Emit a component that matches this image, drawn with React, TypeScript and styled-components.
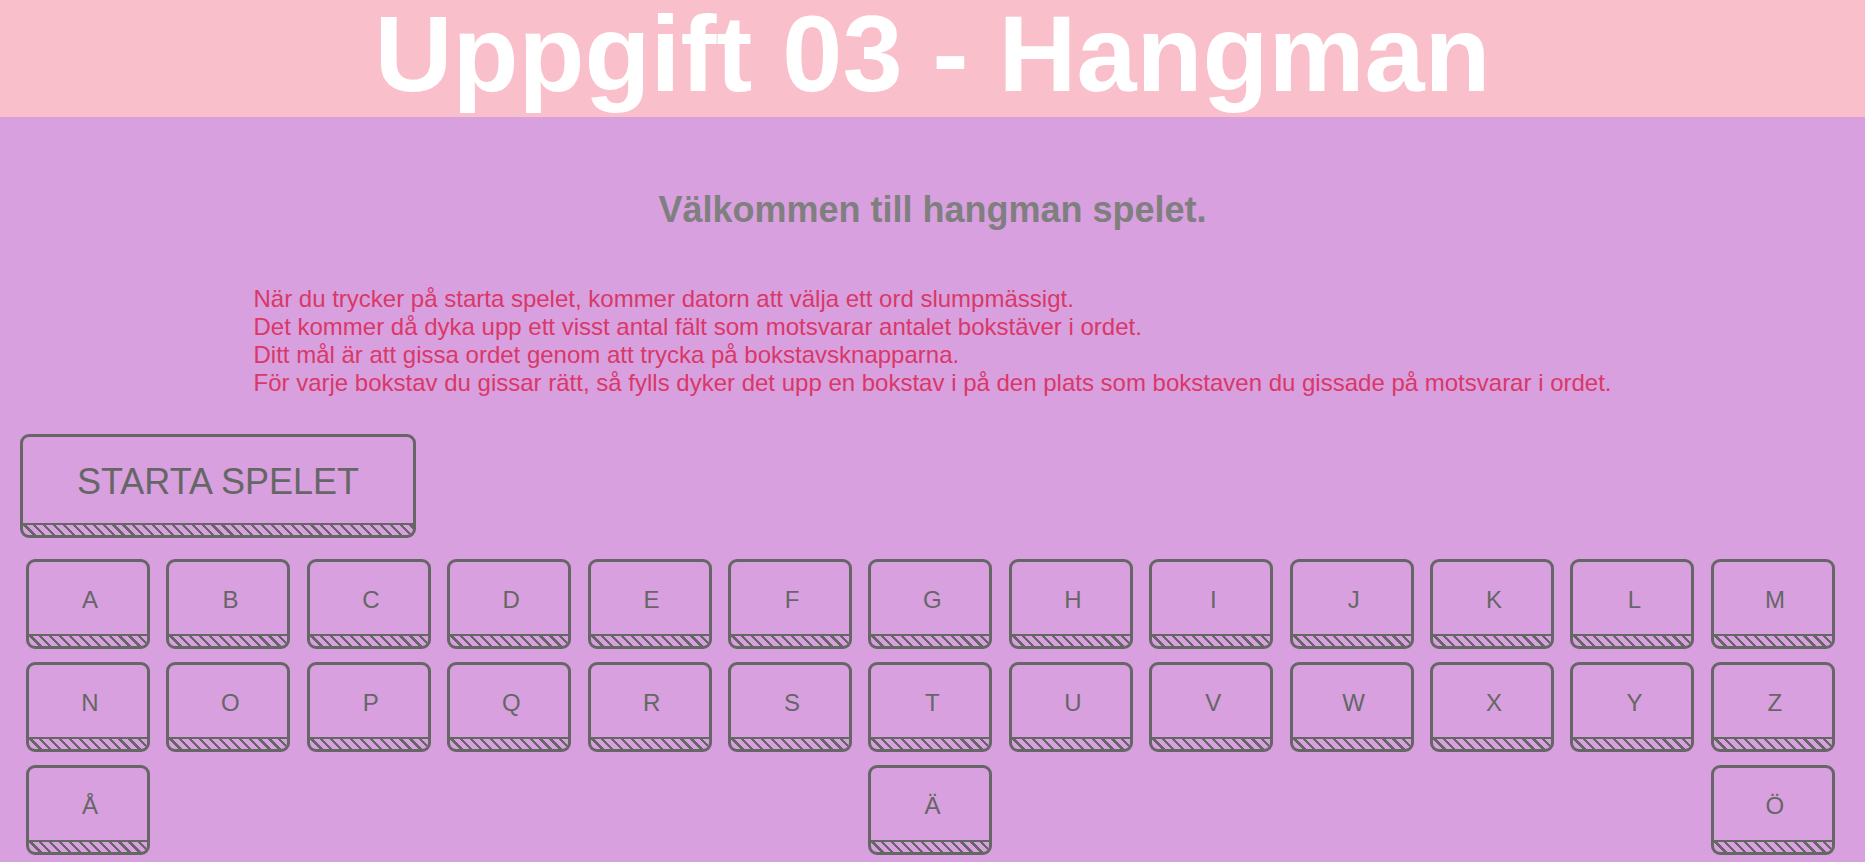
import React from "react";
import styled, { createGlobalStyle } from "styled-components";

const GlobalStyle = createGlobalStyle`
  html, body {
    margin: 0;
    padding: 0;
    min-height: 100%;
    background: #d8a0de;
    font-family: "Liberation Sans", Arial, sans-serif;
  }
`;

const Page = styled.div`
  display: flex;
  flex-direction: column;
  min-height: 862px;
  background: #d8a0de;
`;

const Header = styled.header`
  height: 117px;
  background: #f9c0cb;
  display: flex;
  justify-content: center;
  align-items: flex-start;
`;

const Title = styled.h1`
  margin: 0;
  font-size: 108px;
  line-height: 108px;
  font-weight: bold;
  color: #ffffff;
  white-space: nowrap;
`;

const Welcome = styled.h2`
  margin: 72px 0 0;
  text-align: center;
  font-size: 36px;
  font-weight: bold;
  color: #7f7f7f;
  line-height: normal;
`;

const Intro = styled.p`
  margin: 54px auto 0;
  width: fit-content;
  font-size: 24px;
  line-height: normal;
  color: #d93868;
`;

const Controls = styled.div`
  display: flex;
  flex-direction: column;
  margin-top: 37px;
`;

const KeyBase = styled.button<{ $w: number; $h: number; $col?: number }>`
  box-sizing: border-box;
  width: ${(p) => p.$w}px;
  height: ${(p) => p.$h}px;
  padding: 0;
  border: 3px solid #666;
  border-radius: 9px;
  background: transparent;
  color: #666;
  font-family: "Liberation Sans", Arial, sans-serif;
  display: flex;
  flex-direction: column;
  overflow: hidden;
  cursor: pointer;
  ${(p) => (p.$col ? `grid-column: ${p.$col};` : "")}
`;

const KeyLabel = styled.span<{ $size: number; $indent: number }>`
  flex: 1;
  display: flex;
  align-items: center;
  justify-content: center;
  padding: 3px 0 0 ${(p) => p.$indent}px;
  font-size: ${(p) => p.$size}px;
`;

const Hatch = styled.span<{ $h: number }>`
  display: block;
  height: ${(p) => p.$h}px;
  border-top: 2px solid #666;
  background: repeating-linear-gradient(
    45deg,
    #666 0px,
    #666 2.2px,
    transparent 2.2px,
    transparent 7px
  );
`;

const StartRow = styled.div`
  padding-left: 20px;
`;

const LetterGrid = styled.div`
  display: grid;
  grid-template-columns: repeat(13, 124px);
  justify-content: space-between;
  row-gap: 13px;
  padding: 0 30px 0 26px;
  margin-top: 21px;
`;

const letters = "ABCDEFGHIJKLMNOPQRSTUVWXYZ".split("");
const lastRow: { l: string; col: number }[] = [
  { l: "Å", col: 1 },
  { l: "Ä", col: 7 },
  { l: "Ö", col: 13 },
];

const Key: React.FC<{ label: string; col?: number }> = ({ label, col }) => (
  <KeyBase $w={124} $h={90} $col={col}>
    <KeyLabel $size={24} $indent={4}>
      {label}
    </KeyLabel>
    <Hatch $h={10} />
  </KeyBase>
);

export default function App() {
  return (
    <Page>
      <GlobalStyle />
      <Header>
        <Title>Uppgift 03 - Hangman</Title>
      </Header>
      <Welcome>Välkommen till hangman spelet.</Welcome>
      <Intro>
        När du trycker på starta spelet, kommer datorn att välja ett ord slumpmässigt.
        <br />
        Det kommer då dyka upp ett visst antal fält som motsvarar antalet bokstäver i ordet.
        <br />
        Ditt mål är att gissa ordet genom att trycka på bokstavsknapparna.
        <br />
        För varje bokstav du gissar rätt, så fylls dyker det upp en bokstav i på den plats som bokstaven du gissade på motsvarar i ordet.
      </Intro>
      <Controls>
        <StartRow>
          <KeyBase $w={396} $h={104}>
            <KeyLabel $size={36} $indent={0}>
              STARTA SPELET
            </KeyLabel>
            <Hatch $h={10} />
          </KeyBase>
        </StartRow>
        <LetterGrid>
          {letters.map((l) => (
            <Key key={l} label={l} />
          ))}
          {lastRow.map(({ l, col }) => (
            <Key key={l} label={l} col={col} />
          ))}
        </LetterGrid>
      </Controls>
    </Page>
  );
}
